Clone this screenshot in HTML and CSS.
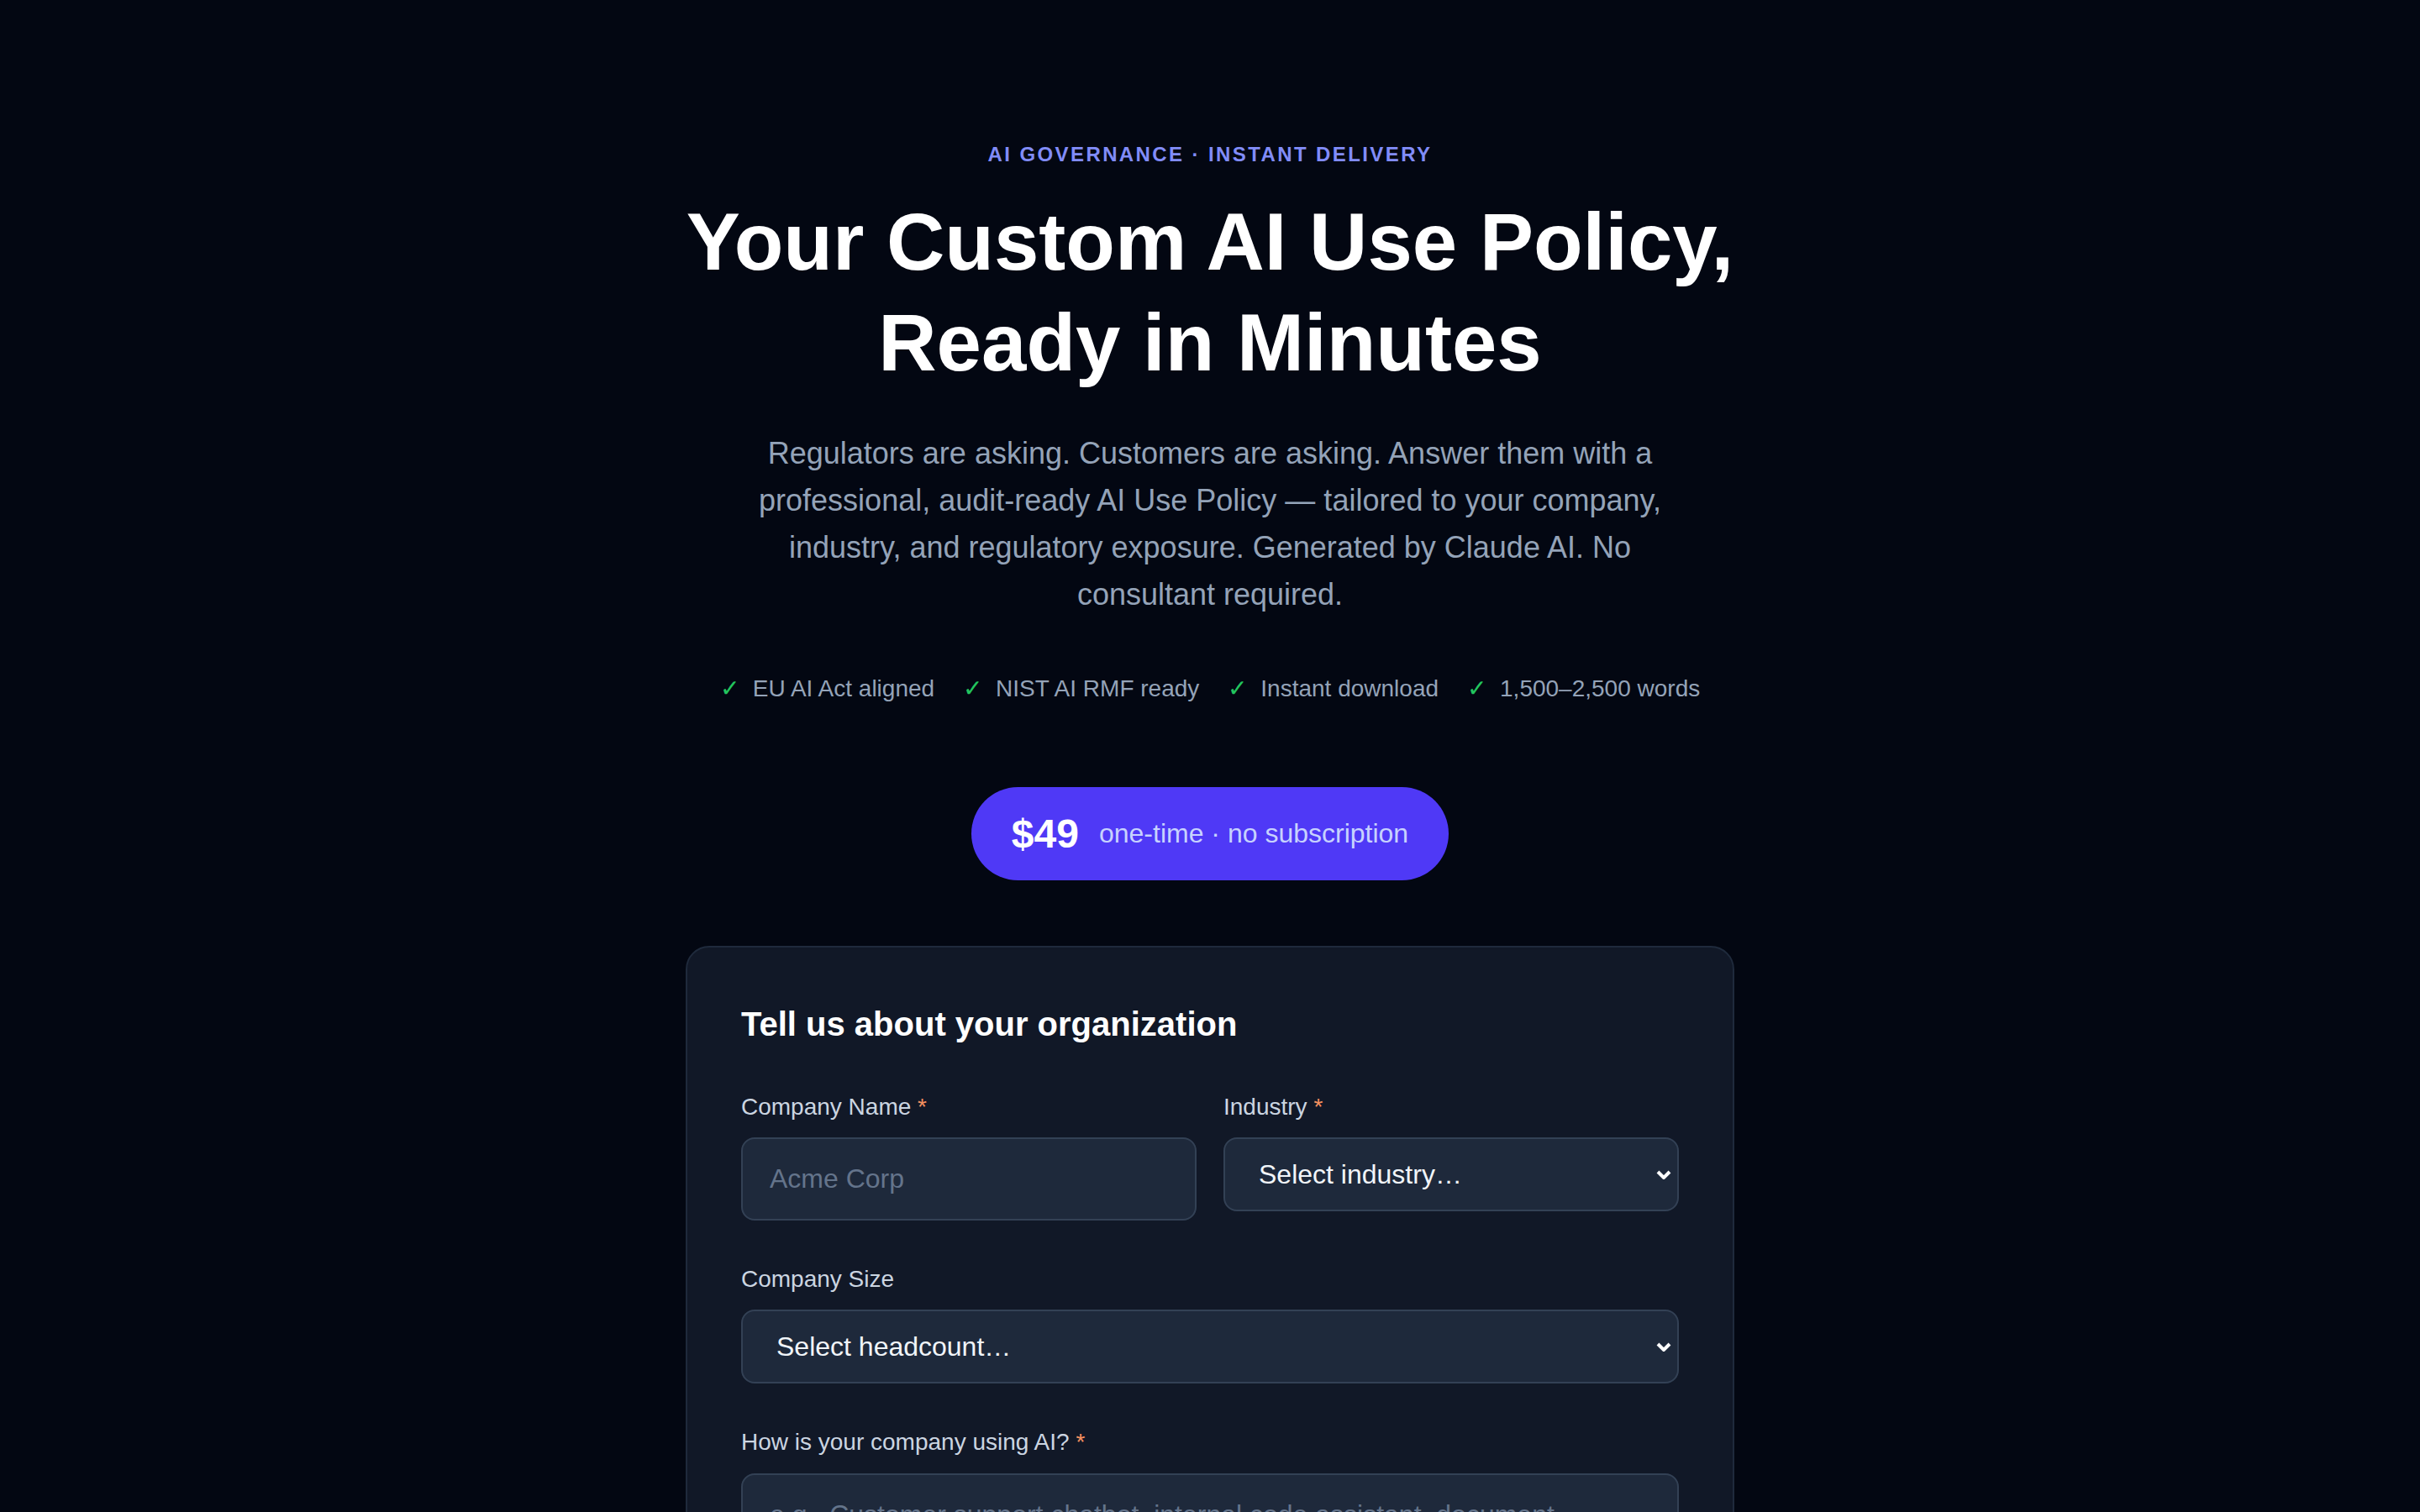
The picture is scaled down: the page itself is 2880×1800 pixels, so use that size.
FILE: index.html
```html
<!DOCTYPE html>
<html lang="en">

<head>
    <meta charset="utf-8">
    <meta name="viewport" content="width=device-width, initial-scale=1.0">
    <title>AI Use Policy Generator</title>

    <link rel="stylesheet" href="styles.css">

</head>

<body>

    <main class="side">
        <header class="hero">
            <p class="eyebrow">AI Governance · Instant Delivery</p>
            <h1>Your Custom AI Use Policy, Ready in Minutes</h1>
            <p class="intro">Regulators are asking. Customers are asking. Answer them with a professional, audit-ready AI Use Policy — tailored to your company, industry, and regulatory exposure. Generated by Claude AI. No consultant required.</p>

            <ul class="fordele">
                <li><span class="check">✓</span>EU AI Act aligned</li>
                <li><span class="check">✓</span>NIST AI RMF ready</li>
                <li><span class="check">✓</span>Instant download</li>
                <li><span class="check">✓</span>1,500–2,500 words</li>
            </ul>

            <div class="pris">
                <span class="belob">$49</span>
                <span class="pris-tekst">one-time · no subscription</span>
            </div>
        </header>

        <form class="kort">
            <h2>Tell us about your organization</h2>

            <div class="raekke">
                <div class="felt">
                    <label for="firma">Company Name <span class="krav">*</span></label>
                    <input type="text" id="firma" placeholder="Acme Corp">
                </div>
                <div class="felt">
                    <label for="branche">Industry <span class="krav">*</span></label>
                    <div class="vaelger">
                        <select id="branche">
                            <option>Select industry…</option>
                            <option>Technology / SaaS</option>
                            <option>Financial Services</option>
                            <option>Healthcare</option>
                            <option>Legal</option>
                            <option>Retail / E-commerce</option>
                            <option>Manufacturing</option>
                            <option>Education</option>
                            <option>Other</option>
                        </select>
                        <svg class="pil" width="18" height="11" viewBox="0 0 18 11"><path d="M2 2 L9 9 L16 2" /></svg>
                    </div>
                </div>
            </div>

            <div class="felt">
                <label for="stoerrelse">Company Size</label>
                <div class="vaelger">
                    <select id="stoerrelse">
                        <option>Select headcount…</option>
                        <option>1–10</option>
                        <option>11–50</option>
                        <option>51–200</option>
                        <option>201–1,000</option>
                        <option>1,000+</option>
                    </select>
                    <svg class="pil" width="18" height="11" viewBox="0 0 18 11"><path d="M2 2 L9 9 L16 2" /></svg>
                </div>
            </div>

            <div class="felt">
                <label for="brug">How is your company using AI? <span class="krav">*</span></label>
                <textarea id="brug" rows="4" placeholder="e.g., Customer support chatbot, internal code assistant, document summarization, marketing copy drafts…"></textarea>
            </div>

            <div class="felt">
                <label for="mail">Email for delivery <span class="krav">*</span></label>
                <input type="email" id="mail" placeholder="you@company.com">
            </div>

            <button type="submit" class="knap">Generate My Policy — $49</button>
        </form>
    </main>

    <footer>
    </footer>
</body>

</html>
```

FILE: styles.css
```css
body {
    margin: 0;
    background: #030712;
    color: #f1f5f9;
    font-family: "Liberation Sans", Arial, sans-serif;
}

.side {
    max-width: 1248px;
    margin: 0 auto;
    padding: 160px 48px;
}

.hero {
    text-align: center;
}

.eyebrow {
    margin: 0 0 20px;
    font-size: 24px;
    line-height: 48px;
    font-weight: 700;
    letter-spacing: 0.1em;
    text-transform: uppercase;
    color: #818cf8;
}

h1 {
    margin: 0 0 44px;
    font-size: 96px;
    line-height: 1.25;
    font-weight: 800;
    color: #ffffff;
}

.intro {
    max-width: 1120px;
    margin: 0 auto 62px;
    font-size: 36px;
    line-height: 1.56;
    color: #94a3b8;
}

.fordele {
    display: flex;
    justify-content: center;
    flex-wrap: wrap;
    gap: 34px;
    margin: 0 0 96px;
    padding: 0;
    list-style: none;
    font-size: 28px;
    line-height: 42px;
    color: #94a3b8;
}

.check {
    margin-right: 16px;
    color: #22c55e;
}

.pris {
    display: inline-flex;
    align-items: center;
    gap: 24px;
    padding: 28px 48px;
    border-radius: 999px;
    background: #4f39f6;
}

.belob {
    font-size: 48px;
    font-weight: 700;
    color: #ffffff;
}

.pris-tekst {
    font-size: 32px;
    color: #c7d2fe;
}

.kort {
    margin-top: 78px;
    padding: 66px 64px 64px;
    border: 2px solid #1f2a3c;
    border-radius: 28px;
    background: #111827;
}

h2 {
    margin: 0 0 56px;
    font-size: 40px;
    line-height: 1.25;
    font-weight: 700;
    color: #ffffff;
}

.raekke {
    display: grid;
    grid-template-columns: 1fr 1fr;
    gap: 32px;
}

.felt {
    margin-bottom: 52px;
}

label {
    display: block;
    margin-bottom: 18px;
    font-size: 28px;
    line-height: 1.3;
    color: #cbd5e1;
}

.krav {
    color: #f59160;
}

input,
select,
textarea {
    display: block;
    width: 100%;
    box-sizing: border-box;
    border: 2px solid #334155;
    border-radius: 16px;
    background-color: #1e293b;
    color: #f1f5f9;
    font-family: inherit;
    font-size: 32px;
}

input,
textarea {
    padding: 29px 32px;
}

select {
    appearance: none;
    padding: 24px 60px 24px 40px;
}

.vaelger {
    position: relative;
}

.pil {
    position: absolute;
    right: 9px;
    top: 50%;
    margin-top: -5px;
    pointer-events: none;
}

.pil path {
    fill: none;
    stroke: #ffffff;
    stroke-width: 4;
}

textarea {
    resize: vertical;
}

::placeholder {
    color: #64748b;
}

.knap {
    width: 100%;
    padding: 32px;
    border: none;
    border-radius: 20px;
    background: #4f39f6;
    color: #ffffff;
    font-family: inherit;
    font-size: 34px;
    font-weight: 700;
}
```
